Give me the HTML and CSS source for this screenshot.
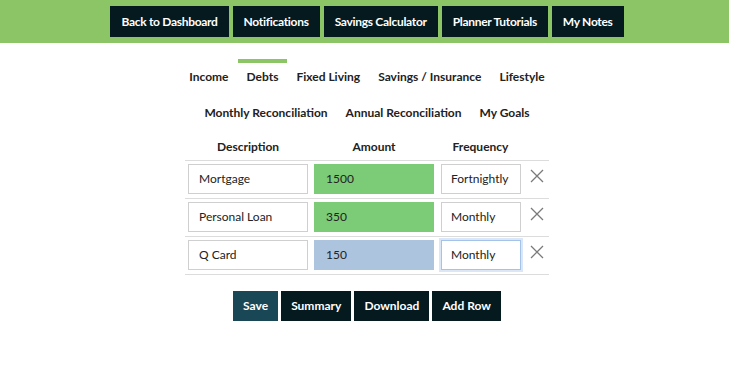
FILE: index.html
```html
<!DOCTYPE html>
<html>
<head>
<meta charset="utf-8">
<link rel="stylesheet" href="styles.css">
</head>
<body>
<header class="topbar">
  <a class="nav-btn">Back to Dashboard</a>
  <a class="nav-btn">Notifications</a>
  <a class="nav-btn">Savings Calculator</a>
  <a class="nav-btn">Planner Tutorials</a>
  <a class="nav-btn">My Notes</a>
</header>
<main class="content">
  <nav class="tabs">
    <div class="tab-row">
      <a class="tab">Income</a>
      <a class="tab active">Debts</a>
      <a class="tab">Fixed Living</a>
      <a class="tab">Savings / Insurance</a>
      <a class="tab">Lifestyle</a>
    </div>
    <div class="tab-row">
      <a class="tab">Monthly Reconciliation</a>
      <a class="tab">Annual Reconciliation</a>
      <a class="tab">My Goals</a>
    </div>
  </nav>
  <table class="debts">
    <colgroup>
      <col class="c-desc">
      <col class="c-amt">
      <col class="c-freq">
      <col class="c-del">
    </colgroup>
    <thead>
      <tr>
        <th>Description</th>
        <th>Amount</th>
        <th>Frequency</th>
        <th></th>
      </tr>
    </thead>
    <tbody>
      <tr>
        <td><div class="field">Mortgage</div></td>
        <td><div class="field amt-green">1500</div></td>
        <td class="freq-cell"><div class="field freq">Fortnightly</div></td>
        <td class="del-cell"><svg class="x" viewBox="0 0 14 14"><path d="M1 1L13 13M13 1L1 13"/></svg></td>
      </tr>
      <tr>
        <td><div class="field">Personal Loan</div></td>
        <td><div class="field amt-green">350</div></td>
        <td class="freq-cell"><div class="field freq">Monthly</div></td>
        <td class="del-cell"><svg class="x" viewBox="0 0 14 14"><path d="M1 1L13 13M13 1L1 13"/></svg></td>
      </tr>
      <tr>
        <td><div class="field">Q Card</div></td>
        <td><div class="field amt-blue">150</div></td>
        <td class="freq-cell"><div class="field freq focused">Monthly</div></td>
        <td class="del-cell"><svg class="x" viewBox="0 0 14 14"><path d="M1 1L13 13M13 1L1 13"/></svg></td>
      </tr>
    </tbody>
  </table>
  <div class="actions">
    <a class="act-btn save">Save</a>
    <a class="act-btn">Summary</a>
    <a class="act-btn">Download</a>
    <a class="act-btn">Add Row</a>
  </div>
</main>
</body>
</html>
```
FILE: styles.css
```css
html, body {
  margin: 0;
  padding: 0;
  background: #fff;
}
body {
  font-family: Lato, "Open Sans", sans-serif;
  color: #222;
  padding-left: 5px;
}
.topbar {
  background: #8cc565;
  height: 43px;
  margin-left: -5px;
  padding-left: 5px;
  display: flex;
  justify-content: center;
  align-items: flex-start;
  gap: 4px;
  padding-top: 6px;
  box-sizing: border-box;
}
.nav-btn {
  background: #041a1f;
  color: #fff;
  font-size: 12px;
  font-weight: 700;
  letter-spacing: -0.3px;
  height: 31px;
  line-height: 31px;
  padding: 0 11px;
  white-space: nowrap;
}
.content {
  display: flex;
  flex-direction: column;
  align-items: center;
  padding-top: 16px;
}
.tabs {
  display: flex;
  flex-direction: column;
  align-items: center;
}
.tab-row {
  display: flex;
  justify-content: center;
}
.tab {
  font-size: 12px;
  font-weight: 700;
  color: #222;
  height: 36px;
  box-sizing: border-box;
  border-top: 4px solid transparent;
  line-height: 28px;
  padding: 0 9px 4px;
  white-space: nowrap;
}
.tab.active {
  border-top-color: #8cc565;
}
.debts {
  border-collapse: collapse;
  table-layout: fixed;
  width: 364px;
  margin-top: 2px;
  font-size: 12px;
}
.c-desc { width: 126px; }
.c-amt { width: 126px; }
.c-freq { width: 87px; }
.c-del { width: 25px; }
.debts th {
  font-weight: 700;
  height: 27px;
  padding: 0;
  text-align: center;
  vertical-align: middle;
}
.debts td {
  border-top: 1px solid #dcdcdc;
  padding: 3px 3px 4px;
  vertical-align: top;
}
.debts tbody tr:last-child td {
  border-bottom: 1px solid #dcdcdc;
}
.debts td.freq-cell {
  padding-left: 4px;
}
.debts td.del-cell {
  padding: 8px 0 0 6px;
}
.field {
  height: 30px;
  line-height: 28px;
  box-sizing: border-box;
  border: 1px solid #cfcfcf;
  padding: 0 10px;
  background: #fff;
  white-space: nowrap;
  overflow: hidden;
  color: #222;
}
.amt-green {
  background: #7ccb77;
  border-color: #7ccb77;
  padding-left: 11px;
}
.amt-blue {
  background: #adc4df;
  border-color: #adc4df;
  padding-left: 11px;
}
.freq {
  padding: 0 9px;
}
.focused {
  border-color: #a3c3ea;
  box-shadow: 0 0 0 2px #dbe7f7;
}
.x {
  width: 14px;
  height: 14px;
  display: block;
}
.x path {
  stroke: #7a7a7a;
  stroke-width: 1.3;
  fill: none;
}
.actions {
  display: flex;
  gap: 3px;
  margin-top: 16px;
}
.act-btn {
  background: #041a1f;
  color: #fff;
  font-size: 12px;
  font-weight: 700;
  height: 30px;
  line-height: 30px;
  padding: 0 10px;
  white-space: nowrap;
}
.act-btn.save {
  background: #1a4756;
}
```
